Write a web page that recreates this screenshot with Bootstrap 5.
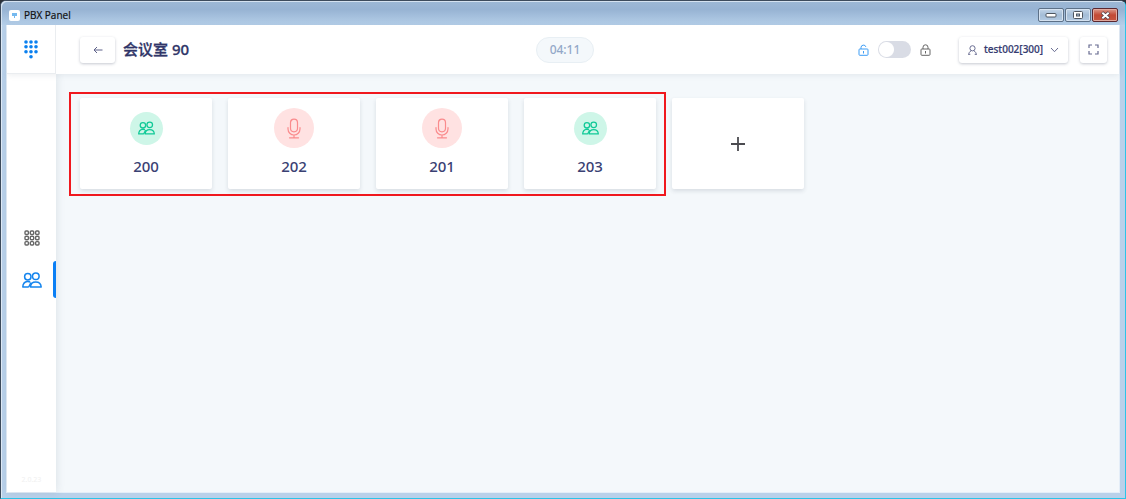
<!DOCTYPE html>
<html lang="zh-CN">
<head>
<meta charset="utf-8">
<meta name="viewport" content="width=device-width, initial-scale=1">
<title>PBX Panel</title>
<link rel="stylesheet" href="https://cdn.jsdelivr.net/npm/bootstrap@5.3.0/dist/css/bootstrap.min.css">
<style>
  body { font-family: "Noto Sans", "Noto Sans CJK SC", sans-serif; color: #2f3568; background: #2b3038; }
  svg { display: block; flex: none; }
  .window-frame { border: 1px solid #3d4b5c; border-right-color: #2cc4e8; border-bottom-color: #2cc4e8; border-radius: 6px 6px 0 0; padding: 0 5px 5px; background: #b9d1ea; box-shadow: inset 1px 1px 0 #dfeaf6; }
  .title-bar { height: 24px; margin: 0 -5px; padding: 0 7px 0 8px; background: linear-gradient(#9db8d5, #97b3d3 35%, #b5cfe9); border-radius: 5px 5px 0 0; box-shadow: inset 1px 1px 0 #d5e2f0; }
  .title-text { font: 10px/20px "Open Sans", sans-serif; color: #111; -webkit-text-stroke: .2px #111; }
  .app-icon { width: 11px; height: 11px; border-radius: 2px; background: #fff; }
  .win-buttons { gap: 1px; }
  .win-btn { width: 26px; height: 14px; padding: 0; border: 1px solid #5d7188; border-radius: 2px; background: linear-gradient(#c3d5e8, #a4bdd7 50%, #b4cbe3); box-shadow: inset 0 0 0 1px #d6e3f1; }
  .win-close { border-color: #5b2830; background: linear-gradient(#dc9a8c, #c34a35 50%, #c65641); box-shadow: inset 0 0 0 1px #e2a99e; }
  .client { background: #f4f8fb; border: 1px solid #e4eef8; border-top: 0; }
  .top-bar { height: 49px; background: #fff; position: relative; z-index: 2; box-shadow: 0 1px 6px rgba(60, 80, 100, .1); }
  .bar-side { flex: 1 1 0; }
  .logo-cell { width: 49px; height: 49px; border-right: 1px solid #eaedf0; border-bottom: 1px solid #eaedf0; }
  .side-bar { width: 49px; background: #fff; box-shadow: 1px 0 8px rgba(60, 80, 100, .12); }
  .side-links { margin: auto 0; padding-bottom: 32px; }
  .soft-btn { height: 26px; padding: 0; border: 0; border-radius: 3px; background: #fff; color: #4a4f7c; box-shadow: 0 1px 3px rgba(40, 50, 80, .27); }
  .back-btn { width: 35px; margin-left: 24px; }
  .full-btn { width: 27px; margin-right: 12px; }
  .user-btn { width: 109px; padding: 0 9px; font-size: 10px; font-weight: 500; color: #353b70; -webkit-text-stroke: .2px #353b70; }
  .room-title { font-size: 15px; line-height: 22px; font-weight: 500; margin: 0 0 2px 8px; -webkit-text-stroke: .3px #2f3568; }
  .timer { height: 26px; width: 58px; border: 1px solid #e8eff4; border-radius: 13px; background: #f4f8fb; color: #93a8c8; font-size: 12px; font-weight: 500; }
  .lock-group { margin-right: 28px; gap: 9px; }
  .form-switch .lock-switch { width: 33px; height: 17px; margin: 0; border: 0; background-color: #d9dce5; background-image: radial-gradient(circle, #fff 0 7px, transparent 8px); background-size: 17px 17px; background-position: left center; background-repeat: no-repeat; }
  .form-switch .lock-switch:checked { background-color: #0d84f5; background-position: right center; }
  .side-link { height: 38px; color: #666; }
  .side-link.active { color: #1585ee; position: relative; }
  .side-link.active::after { content: ""; position: absolute; right: 0; top: 0; width: 3px; height: 37px; background: #0a7ff5; border-radius: 3px 0 0 3px; }
  .version { font-size: 7px; line-height: 9px; color: #f0f0f0; }
  .board { padding: 18px 13px; }
  .marked { border: 2px solid #f0181e; padding: 4px 8px 5px 9px; gap: 16px; margin-right: 6px; }
  .tile { width: 132px; height: 91px; border: 0; border-radius: 2px; background: #fff; padding: 0 0 3px; box-shadow: 0 2px 4px rgba(40, 60, 80, .14); color: #3a4173; }
  .tile-add { margin-top: 6px; padding: 0; }
  .tile-icon { height: 40px; }
  .disc { width: 33px; height: 33px; border-radius: 50%; background: #cef6e8; color: #10c997; }
  .disc-mic { width: 40px; height: 40px; background: #ffe2e2; color: #fa8b8d; }
  .tile-number { font-size: 15px; line-height: 20px; font-weight: 500; margin-top: 8px; }
</style>
</head>
<body>
<svg width="0" height="0" class="position-absolute" aria-hidden="true">
  <symbol id="people" viewBox="0 0 20 16"><g fill="none" stroke="currentColor" stroke-width="1.5" stroke-linejoin="round"><circle cx="13.8" cy="4.3" r="3.3"/><path d="M8.500 15c.1-3.100 2-5 5.200-5s5.300 1.900 5.500 5z"/><circle cx="5.800" cy="4.800" r="3.200"/><path d="M6.700 15H.8c.1-3.200 1.500-5.200 4.600-5.500 1.200-.1 2 .1 2.700.5M9 10.500 6.700 15"/></g></symbol>
  <symbol id="mic" viewBox="0 0 14 20"><g fill="none" stroke="currentColor" stroke-width="1.200" stroke-linecap="round"><rect x="3.500" y=".7" width="7" height="12.600" rx="3.500"/><path d="M1 9v1.500a6 6 0 0 0 12 0V9M7 16.500v2.800M2.500 19.300h9"/></g></symbol>
</svg>
<div class="window-frame min-vh-100 d-flex flex-column">
  <div class="title-bar d-flex align-items-center justify-content-between">
    <div class="d-flex align-items-center mt-1">
      <span class="app-icon d-flex align-items-center justify-content-center"><svg width="7" height="7" viewBox="0 0 7 7"><path d="M1 1h5v3H4v2H3V4H1z" fill="#75b9ef"/></svg></span>
      <span class="title-text ms-1">PBX Panel</span>
    </div>
    <div class="win-buttons d-flex mt-1">
      <button class="win-btn d-flex align-items-center justify-content-center" aria-label="Minimize"><svg width="12" height="6" viewBox="0 0 12 6"><rect x="1" y="1.500" width="10" height="3.500" rx="1" fill="#fff" stroke="#4e5660"/></svg></button>
      <button class="win-btn d-flex align-items-center justify-content-center" aria-label="Maximize"><svg width="10" height="8" viewBox="0 0 10 8"><rect x=".5" y=".5" width="9" height="7" rx="1" fill="#fff" stroke="#4e5660"/><rect x="3.500" y="3" width="3" height="2" fill="#a9c0da" stroke="#4e5660"/></svg></button>
      <button class="win-btn win-close d-flex align-items-center justify-content-center" aria-label="Close"><svg width="11" height="9" viewBox="0 0 11 9"><path d="m2 1.500 7 6m0-6-7 6" stroke="#4c4049" stroke-width="3.600"/><path d="m2.300 1.700 6.400 5.600m0-5.600L2.300 7.300" stroke="#fff" stroke-width="2"/></svg></button>
    </div>
  </div>
  <div class="client flex-grow-1 d-flex flex-column">
    <header class="top-bar d-flex align-items-center">
      <div class="bar-side d-flex align-items-center">
        <a href="#" class="logo-cell d-flex align-items-center justify-content-center" aria-label="PBX Panel">
          <svg width="14" height="20" viewBox="0 0 14 20" fill="#0a80ef"><circle cx="2" cy="3" r="1.800"/><circle cx="7" cy="3" r="1.800"/><circle cx="12" cy="3" r="1.800"/><circle cx="2" cy="7.800" r="1.800"/><circle cx="7" cy="7.800" r="1.800"/><circle cx="12" cy="7.800" r="1.800"/><circle cx="2" cy="12.800" r="1.800"/><circle cx="7" cy="12.800" r="1.800"/><circle cx="12" cy="12.800" r="1.800"/><circle cx="7" cy="17.800" r="1.800"/></svg>
        </a>
        <button class="soft-btn back-btn d-flex align-items-center justify-content-center" aria-label="返回"><svg width="10" height="8" viewBox="0 0 10 8"><path d="M9.500 4H1m3-3L1 4l3 3" fill="none" stroke="#5d6189"/></svg></button>
        <h1 class="room-title">会议室 90</h1>
      </div>
      <div class="timer d-flex align-items-center justify-content-center ms-1">04:11</div>
      <div class="bar-side d-flex align-items-center justify-content-end">
        <div class="lock-group d-flex align-items-center">
          <label for="lock" class="d-flex" aria-label="解锁"><svg width="11" height="12" viewBox="0 0 11 12"><g fill="none" stroke="#3c9df5"><rect x="1" y="5" width="9" height="6.300" rx=".8"/><path d="M3 5V3.500a2.500 2.500 0 0 1 4.900-.6M5.500 7v2.500"/></g></svg></label>
          <div class="form-check form-switch d-flex align-items-center p-0 m-0"><input class="form-check-input lock-switch" type="checkbox" role="switch" id="lock" aria-label="锁定会议室"></div>
          <svg width="11" height="12" viewBox="0 0 11 12"><g fill="none" stroke="#666"><rect x="1" y="5" width="9" height="6.300" rx=".8"/><path d="M3 5V3.300a2.500 2.500 0 0 1 5 0V5M5.500 7v2.500"/></g></svg>
        </div>
        <button class="soft-btn user-btn d-flex align-items-center justify-content-between me-2">
          <svg width="9" height="10" viewBox="0 0 9 10"><g fill="none" stroke="#686c91"><circle cx="4.500" cy="3.300" r="2.600"/><path d="M.7 9.800c0-2 1-3.200 2.300-3.900m5.300 3.900c0-2-1-3.200-2.300-3.900M.5 9.300h1.800m4.400 0h1.800"/></g></svg>
          <span>test002[300]</span>
          <svg width="9" height="6" viewBox="0 0 9 6"><path d="m1 1 3.500 3.700L8 1" fill="none" stroke="#686c91"/></svg>
        </button>
        <button class="soft-btn full-btn d-flex align-items-center justify-content-center ms-1" aria-label="全屏"><svg width="11" height="11" viewBox="0 0 11 11"><path d="M1 4V1h3m3 0h3v3m0 3v3H7M4 10H1V7" fill="none" stroke="#686c91" stroke-width="1.200"/></svg></button>
      </div>
    </header>
    <div class="flex-grow-1 d-flex">
      <nav class="side-bar d-flex flex-column">
        <div class="side-links">
          <a href="#" class="side-link d-flex align-items-center justify-content-center mb-1" aria-label="拨号盘"><svg width="16" height="16" viewBox="0 0 16 16"><g fill="none" stroke="currentColor" stroke-width="1.400"><rect x="1" y="1" width="3.400" height="3.400" rx="1"/><rect x="6.300" y="1" width="3.400" height="3.400" rx="1"/><rect x="11.600" y="1" width="3.400" height="3.400" rx="1"/><rect x="1" y="6.300" width="3.400" height="3.400" rx="1"/><rect x="6.300" y="6.300" width="3.400" height="3.400" rx="1"/><rect x="11.600" y="6.300" width="3.400" height="3.400" rx="1"/><rect x="1" y="11.600" width="3.400" height="3.400" rx="1"/><rect x="6.300" y="11.600" width="3.400" height="3.400" rx="1"/><rect x="11.600" y="11.600" width="3.400" height="3.400" rx="1"/></g></svg></a>
          <a href="#" class="side-link active d-flex align-items-center justify-content-center" aria-label="会议室"><svg width="20" height="16"><use href="#people"/></svg></a>
        </div>
        <div class="version text-center pb-2" aria-hidden="true">2.0.23</div>
      </nav>
      <main class="board flex-grow-1 d-flex flex-wrap align-items-start align-content-start">
        <div class="marked d-flex flex-wrap">
          <button class="tile"><span class="tile-icon d-flex align-items-center justify-content-center"><span class="disc d-flex align-items-center justify-content-center"><svg width="17" height="14"><use href="#people"/></svg></span></span><span class="tile-number d-block">200</span></button>
          <button class="tile"><span class="tile-icon d-flex align-items-center justify-content-center"><span class="disc disc-mic d-flex align-items-center justify-content-center"><svg width="14" height="21"><use href="#mic"/></svg></span></span><span class="tile-number d-block">202</span></button>
          <button class="tile"><span class="tile-icon d-flex align-items-center justify-content-center"><span class="disc disc-mic d-flex align-items-center justify-content-center"><svg width="14" height="21"><use href="#mic"/></svg></span></span><span class="tile-number d-block">201</span></button>
          <button class="tile"><span class="tile-icon d-flex align-items-center justify-content-center"><span class="disc d-flex align-items-center justify-content-center"><svg width="17" height="14"><use href="#people"/></svg></span></span><span class="tile-number d-block">203</span></button>
        </div>
        <button class="tile tile-add d-flex align-items-center justify-content-center" aria-label="添加成员"><svg width="16" height="16" viewBox="0 0 16 16"><path d="M8 1v14M1 8h14" stroke="#4b4b50" stroke-width="1.800"/></svg></button>
      </main>
    </div>
  </div>
</div>
<script src="https://cdn.jsdelivr.net/npm/bootstrap@5.3.0/dist/js/bootstrap.bundle.min.js"></script>
</body>
</html>
